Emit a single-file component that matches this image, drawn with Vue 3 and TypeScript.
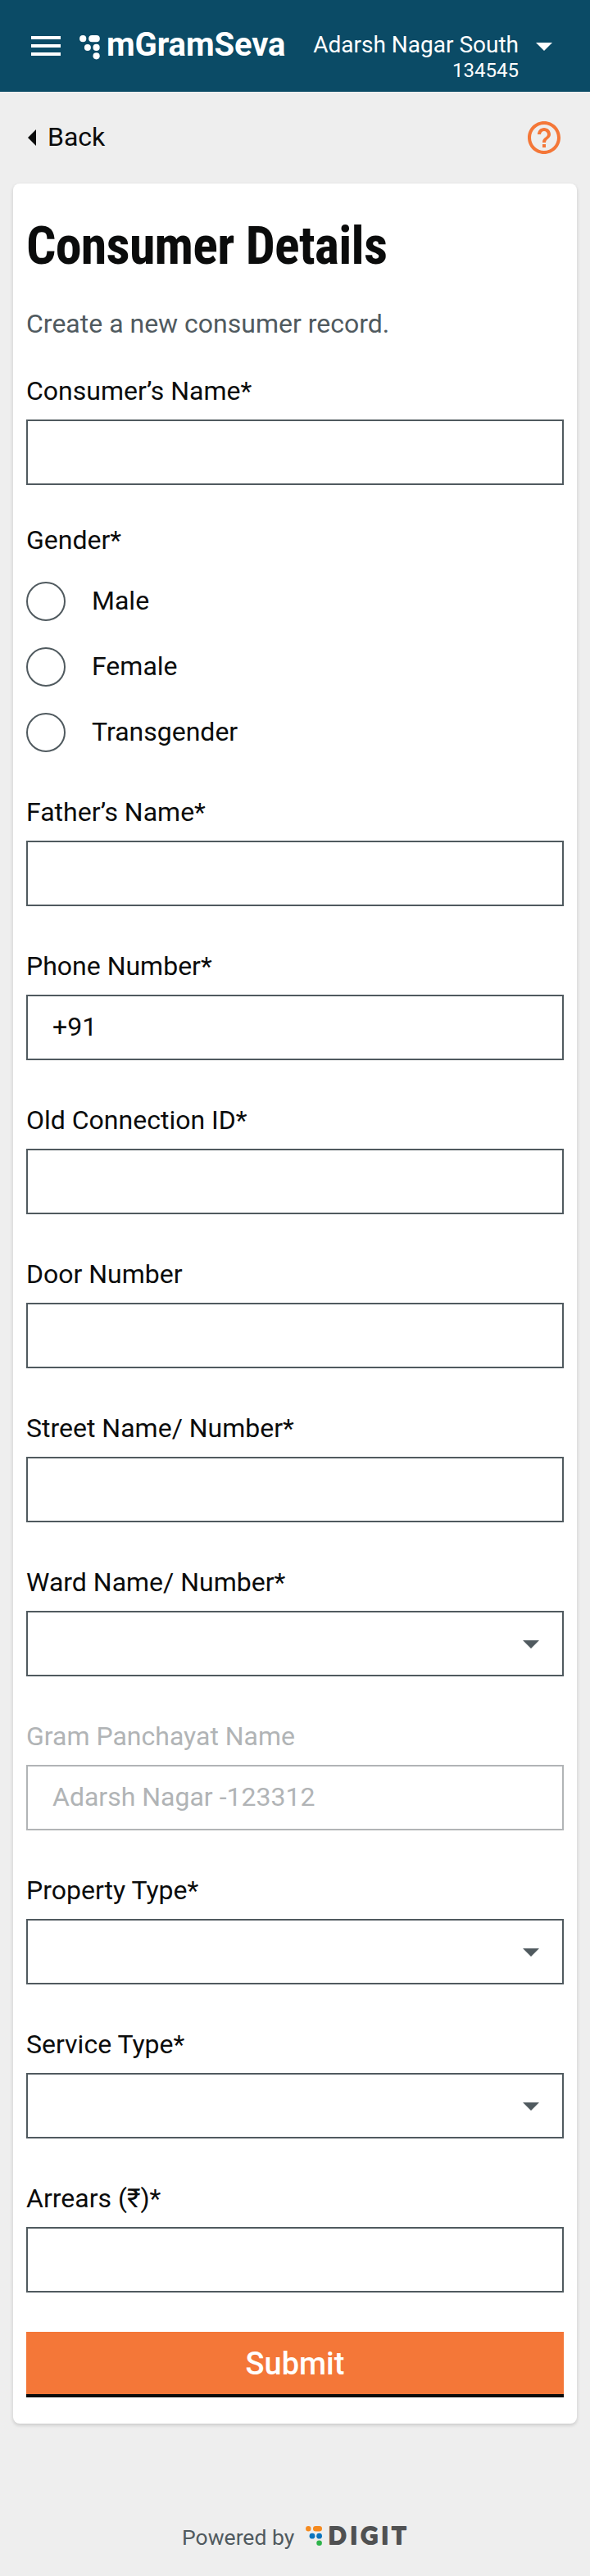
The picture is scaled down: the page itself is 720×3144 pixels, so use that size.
<script setup lang="ts">
import { ref } from 'vue'

interface Field {
  id: string
  label: string
  kind: 'text' | 'select'
  value?: string
  disabled?: boolean
}

const genders: string[] = ['Male', 'Female', 'Transgender']
const gender = ref<string>('')

const fields: Field[] = [
  { id: 'father', label: 'Father’s Name*', kind: 'text' },
  { id: 'phone', label: 'Phone Number*', kind: 'text', value: '+91' },
  { id: 'connection', label: 'Old Connection ID*', kind: 'text' },
  { id: 'door', label: 'Door Number', kind: 'text' },
  { id: 'street', label: 'Street Name/ Number*', kind: 'text' },
  { id: 'ward', label: 'Ward Name/ Number*', kind: 'select' },
  { id: 'gp', label: 'Gram Panchayat Name', kind: 'text', value: 'Adarsh Nagar -123312', disabled: true },
  { id: 'property', label: 'Property Type*', kind: 'select' },
  { id: 'service', label: 'Service Type*', kind: 'select' },
  { id: 'arrears', label: 'Arrears (₹)*', kind: 'text' },
]
</script>

<template>
  <div class="page">
    <header class="topbar">
      <svg class="menu" width="36" height="24" viewBox="0 0 36 24" fill="#fff">
        <rect width="36" height="4" /><rect y="10" width="36" height="4" /><rect y="20" width="36" height="4" />
      </svg>
      <svg class="dots" width="26" height="30" viewBox="0 0 26 30" fill="#fff">
        <circle cx="4.2" cy="4.2" r="4.1" />
        <rect x="11.2" y="0.1" width="13.6" height="8.2" rx="4.1" />
        <circle cx="9.9" cy="14.9" r="4" />
        <circle cx="20.6" cy="14.9" r="4.1" />
        <circle cx="20.6" cy="25.3" r="4.1" />
      </svg>
      <span class="brand">mGramSeva</span>
      <div class="tenant">
        <span class="tenant-name">Adarsh Nagar South</span>
        <span class="tenant-code">134545</span>
      </div>
      <svg class="tenant-caret" width="20" height="10" viewBox="0 0 20 10" fill="#fff"><path d="M0 0h20L10 10z" /></svg>
    </header>

    <nav class="subnav">
      <a class="back">
        <svg width="10" height="20" viewBox="0 0 10 20" fill="#0b0c0c"><path d="M10 0v20L0 10z" /></svg>
        <span>Back</span>
      </a>
      <svg class="help" width="48" height="48" viewBox="0 0 24 24" fill="#f47738">
        <path d="M11 18h2v-2h-2v2zm1-16C6.48 2 2 6.48 2 12s4.480 10 10 10 10-4.480 10-10S17.520 2 12 2zm0 18c-4.410 0-8-3.590-8-8s3.590-8 8-8 8 3.590 8 8-3.590 8-8 8zm0-14c-2.210 0-4 1.790-4 4h2c0-1.100.9-2 2-2s2 .9 2 2c0 2-3 1.750-3 5h2c0-2.250 3-2.500 3-5 0-2.210-1.790-4-4-4z" />
      </svg>
    </nav>

    <main class="card">
      <h1>Consumer Details</h1>
      <p class="intro">Create a new consumer record.</p>

      <div class="field">
        <label for="name">Consumer’s Name*</label>
        <input id="name" class="box" type="text" />
      </div>

      <div class="genders">
        <span class="label">Gender*</span>
        <label v-for="g in genders" :key="g" class="radio">
          <input v-model="gender" type="radio" name="gender" :value="g" />
          <span>{{ g }}</span>
        </label>
      </div>

      <div class="stack">
        <div v-for="f in fields" :key="f.id" class="field" :class="{ disabled: f.disabled }">
          <label :for="f.id">{{ f.label }}</label>
          <input v-if="f.kind === 'text'" :id="f.id" class="box" type="text" :value="f.value" :disabled="f.disabled" />
          <button v-else :id="f.id" class="box select" type="button">
            <svg width="20" height="10" viewBox="0 0 20 10" fill="#505a5f"><path d="M0 0h20L10 10z" /></svg>
          </button>
        </div>
      </div>

      <button class="submit" type="submit">Submit</button>
    </main>

    <footer class="footer">
      <span class="powered">Powered by</span>
      <svg class="digit" width="150" height="40" viewBox="0 0 150 40">
        <circle cx="4.300" cy="5.200" r="3.200" fill="#f58a1f" />
        <rect x="10" y="1.900" width="11" height="6.600" rx="3.300" fill="#f58a1f" />
        <circle cx="9" cy="14.200" r="3.400" fill="#0b74bd" />
        <circle cx="17.600" cy="14.200" r="3.400" fill="#0b74bd" />
        <circle cx="17.600" cy="22.700" r="3.300" fill="#2fb34a" />
        <text class="wordmark" x="28.700 55.500 68.200 93.500 106.300" y="24">DIGIT</text>
      </svg>
    </footer>
  </div>
</template>

<style>
body {
  margin: 0;
  background: #eee;
}
</style>

<style scoped>
.page {
  width: 720px;
  min-height: 3144px;
  box-sizing: border-box;
  background: #eee;
  color: #0b0c0c;
  font-family: Roboto, "Liberation Sans", sans-serif;
  font-size: 32px;
  line-height: 38px;
}
.topbar {
  display: flex;
  align-items: flex-start;
  height: 112px;
  box-sizing: border-box;
  padding: 0 46px 0 38px;
  background: #0b4b66;
  color: #fff;
}
.menu {
  margin-top: 44px;
}
.dots {
  margin: 43px 0 0 23px;
}
.brand {
  margin: 31px 0 0 7px;
  font-size: 40px;
  line-height: 48px;
  font-weight: 700;
  letter-spacing: -0.1px;
}
.tenant {
  display: flex;
  flex-direction: column;
  align-items: flex-end;
  margin: 38px 0 0 auto;
}
.tenant-name {
  font-size: 28px;
  line-height: 34px;
}
.tenant-code {
  font-size: 24px;
  line-height: 28px;
}
.tenant-caret {
  margin: 52px 0 0 21px;
}
.subnav {
  display: flex;
  justify-content: space-between;
  align-items: center;
  height: 112px;
  padding: 0 32px 0 34px;
}
.back {
  display: flex;
  align-items: center;
  gap: 14px;
}
.back span {
  padding-bottom: 2px;
}
.card {
  box-sizing: border-box;
  margin: 0 16px;
  height: 2734px;
  padding: 37px 16px 32px;
  border-radius: 8px;
  background: #fff;
  box-shadow: 0 2px 4px rgba(0, 0, 0, 0.16);
}
h1 {
  margin: 0;
  font-family: "Roboto Condensed", Roboto, sans-serif;
  font-stretch: 75%;
  font-size: 64px;
  line-height: 80px;
  font-weight: 700;
  letter-spacing: -0.75px;
  white-space: nowrap;
}
.intro {
  margin: 35px 0 44px;
  color: #505a5f;
}
.field {
  display: flex;
  flex-direction: column;
  gap: 16px;
}
.box {
  width: 100%;
  height: 80px;
  box-sizing: border-box;
  padding: 0 30px 2px;
  border: 2px solid #505a5f;
  border-radius: 0;
  background: #fff;
  color: #0b0c0c;
  font: inherit;
}
.select {
  display: flex;
  align-items: center;
  justify-content: flex-end;
  padding: 2px 28px 0 0;
}
.disabled label,
.disabled .box {
  color: #b1b4b6;
}
.disabled .box {
  border-color: #b1b4b6;
}
.genders {
  display: flex;
  flex-direction: column;
  gap: 32px;
  margin: 48px 0 54px;
}
.radio {
  display: flex;
  align-items: center;
  gap: 32px;
  height: 48px;
}
.radio input {
  appearance: none;
  width: 48px;
  height: 48px;
  box-sizing: border-box;
  margin: 0;
  border: 2px solid #505a5f;
  border-radius: 50%;
}
.radio span {
  padding-bottom: 2px;
}
.stack {
  display: flex;
  flex-direction: column;
  gap: 54px;
}
.submit {
  display: block;
  width: 100%;
  height: 80px;
  margin-top: 48px;
  padding: 2px 0 0;
  border: 0;
  border-bottom: 4px solid #0b0c0c;
  background: #f47738;
  color: #fff;
  font: 500 38px/44px Roboto, sans-serif;
}
.footer {
  display: flex;
  align-items: flex-start;
  padding: 122px 0 0 222px;
}
.powered {
  flex: none;
  width: 150px;
  color: #505a5f;
  font-size: 26.5px;
  line-height: 34px;
}
.digit {
  flex: none;
  margin-top: 1px;
}
.wordmark {
  font-family: Lato, sans-serif;
  font-size: 28.7px;
  font-weight: 700;
  fill: #505152;
  stroke: #505152;
  stroke-width: 2;
  stroke-linejoin: round;
}
</style>
